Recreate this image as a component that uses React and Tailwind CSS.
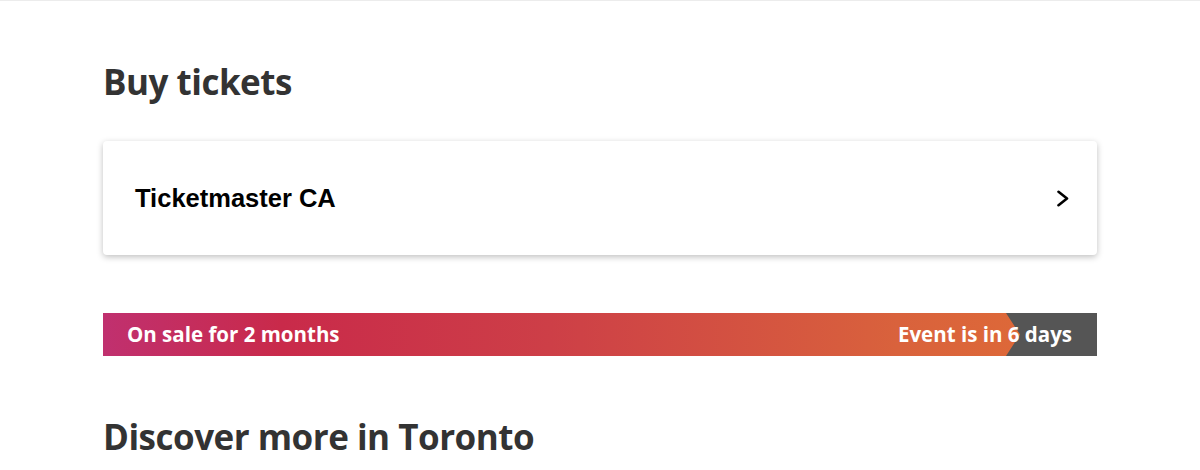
const App = () => {
  return (
    <div className="w-[1200px] h-[470px] bg-white border-t border-[#ececec] overflow-hidden font-['Open_Sans',sans-serif]">
      <div className="ml-[103px] w-[994px] pt-[57px]">
        {/* Buy tickets */}
        <h2 className="text-[35px] leading-[48px] font-bold text-[#333] tracking-[-0.5px]">Buy tickets</h2>

        <button className="mt-[35px] w-full h-[114px] flex items-center justify-between pl-[32px] pr-[27px] bg-white rounded-[4px] shadow-[0_2px_6px_rgba(0,0,0,0.25)] cursor-pointer">
          <span className="font-['Liberation_Sans',sans-serif] font-bold text-[25.5px] text-black">Ticketmaster CA</span>
          <svg width="14" height="17" viewBox="0 0 14 17" fill="none" stroke="#000" strokeWidth="2.6" strokeLinecap="round" strokeLinejoin="round">
            <path d="M2.5 1.8 11 8.5 2.5 15.2" />
          </svg>
        </button>

        {/* Sale timeline */}
        <div className="relative mt-[58px] h-[43px] flex items-center justify-between bg-[linear-gradient(90deg,#c0306f_0%,#c92a4a_18%,#cd3f47_45%,#d9623c_80%,#e06c36_100%)] text-white font-bold text-[20.5px]">
          <div className="absolute right-0 inset-y-0 w-[91px] bg-[#555] [clip-path:polygon(0_0,100%_0,100%_100%,0_100%,14px_50%)]" />
          <span className="relative pl-[24px]">On sale for 2 months</span>
          <span className="relative pr-[25px]">Event is in 6 days</span>
        </div>

        <h2 className="mt-[57px] text-[35px] leading-[48px] font-bold text-[#333] tracking-[-0.5px]">Discover more in Toronto</h2>
      </div>
    </div>
  );
};

export default App;
